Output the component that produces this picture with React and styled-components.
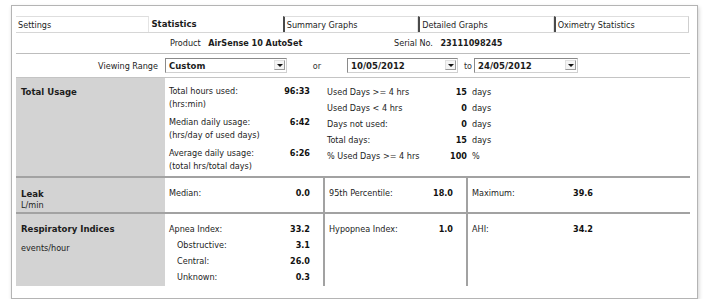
import styled, { createGlobalStyle } from "styled-components";

const GlobalStyle = createGlobalStyle`
  body {
    margin: 0;
    background: #ffffff;
    font-family: "DejaVu Sans Condensed", "DejaVu Sans", sans-serif;
    font-size: 9px;
    color: #1c1c1c;
  }
`;

const tabs = ["Settings", "Statistics", "Summary Graphs", "Detailed Graphs", "Oximetry Statistics"];

const usage = [
  ["Total hours used:", "(hrs:min)", "96:33"],
  ["Median daily usage:", "(hrs/day of used days)", "6:42"],
  ["Average daily usage:", "(total hrs/total days)", "6:26"],
];

const days = [
  ["Used Days >= 4 hrs", "15", "days"],
  ["Used Days < 4 hrs", "0", "days"],
  ["Days not used:", "0", "days"],
  ["Total days:", "15", "days"],
  ["% Used Days >= 4 hrs", "100", "%"],
];

const apnea = [
  ["Apnea Index:", "33.2", false],
  ["Obstructive:", "3.1", true],
  ["Central:", "26.0", true],
  ["Unknown:", "0.3", true],
];

const App = () => {
  return (
    <>
      <GlobalStyle />
      <Panel>
        <TabBar>
          {tabs.map((t, i) => (
            <Tab key={t} $active={i === 1} $marked={i > 1}>
              {t}
            </Tab>
          ))}
        </TabBar>

        <ProductRow>
          <span />
          <Pair>
            Product <b>AirSense 10 AutoSet</b>
          </Pair>
          <Pair>
            Serial No. <b>23111098245</b>
          </Pair>
        </ProductRow>

        <RangeRow>
          <RangeLabel>Viewing Range</RangeLabel>
          <Select $w={122}>Custom<DropButton /></Select>
          <Joiner $w={60}>or</Joiner>
          <Select $w={111}>10/05/2012<DropButton /></Select>
          <Joiner $w={16}>to</Joiner>
          <Select $w={104}>24/05/2012<DropButton /></Select>
        </RangeRow>

        <Table>
          <Row $h={98}>
            <LabelCell $pad={7}>
              <b>Total Usage</b>
            </LabelCell>
            <UsageCell>
              {usage.map(([a, b, v]) => (
                <UsageItem key={a}>
                  <div>
                    {a}
                    <br />
                    {b}
                  </div>
                  <Value>{v}</Value>
                </UsageItem>
              ))}
            </UsageCell>
            <DaysCell>
              {days.map(([a, v, u]) => (
                <DaysItem key={a}>
                  <span>{a}</span>
                  <Value>{v}</Value>
                  <span>{u}</span>
                </DaysItem>
              ))}
            </DaysCell>
          </Row>

          <Row $h={34}>
            <LabelCell $pad={9}>
              <b>Leak</b>
              <Unit>L/min</Unit>
            </LabelCell>
            <StatCell $pad={9}>
              <StatLine>
                <span>Median:</span>
                <Value>0.0</Value>
              </StatLine>
            </StatCell>
            <StatCell $pad={9} $divided>
              <StatLine>
                <span>95th Percentile:</span>
                <Value>18.0</Value>
              </StatLine>
            </StatCell>
            <StatCell $pad={9} $divided>
              <StatLine $wide>
                <span>Maximum:</span>
                <Value>39.6</Value>
              </StatLine>
            </StatCell>
          </Row>

          <Row $h={72} $last>
            <LabelCell $pad={7} $lh={16}>
              <b>Respiratory Indices</b>
              <Sub>events/hour</Sub>
            </LabelCell>
            <StatCell $pad={7} $lh={16}>
              {apnea.map(([a, v, indent]) => (
                <StatLine key={a} $indent={indent}>
                  <span>{a}</span>
                  <Value>{v}</Value>
                </StatLine>
              ))}
            </StatCell>
            <StatCell $pad={7} $lh={16} $divided>
              <StatLine>
                <span>Hypopnea Index:</span>
                <Value>1.0</Value>
              </StatLine>
            </StatCell>
            <StatCell $pad={7} $lh={16} $divided>
              <StatLine $wide>
                <span>AHI:</span>
                <Value>34.2</Value>
              </StatLine>
            </StatCell>
          </Row>
        </Table>
      </Panel>
    </>
  );
};

const Panel = styled.div`
  box-sizing: border-box;
  width: 687px;
  height: 294px;
  margin: 5px 0 0 11px;
  padding: 10px 7px 0 4px;
  border: 1px solid #b4b4b4;
  box-shadow: 1px 2px 4px rgba(0, 0, 0, 0.18);
  background: #fff;
`;

const TabBar = styled.div`
  display: flex;
  width: 673px;
  height: 17px;
  border-bottom: 1px solid #d6d6d6;
  box-sizing: border-box;
`;

const Tab = styled.div`
  flex: 1;
  display: flex;
  align-items: center;
  box-sizing: border-box;
  padding: 1px 0 0 2px;
  white-space: nowrap;
  font-weight: ${(p) => (p.$active ? "bold" : "normal")};
  font-size: ${(p) => (p.$active ? "9.5px" : "9px")};
  border-top: 1px solid ${(p) => (p.$active ? "transparent" : "#dedede")};
  border-right: 1px solid ${(p) => (p.$active ? "transparent" : "#e4e4e4")};
  border-left: ${(p) => (p.$marked ? "2px solid #4a4a4a" : "0")};
  margin-top: ${(p) => (p.$active ? "-4px" : "0")};
  background: #fff;
  &:last-child {
    border-right-color: #cfcfcf;
  }
`;

const ProductRow = styled.div`
  display: grid;
  grid-template-columns: 154px 224px 1fr;
  align-items: center;
  height: 20px;
  width: 674px;
  border-bottom: 1px solid #bdbdbd;
`;

const Pair = styled.div`
  b {
    margin-left: 5px;
    font-weight: bold;
  }
`;

const RangeRow = styled.div`
  display: flex;
  align-items: center;
  height: 23px;
  width: 674px;
  border-bottom: 1px solid #c4c4c4;
`;

const RangeLabel = styled.div`
  width: 149px;
  box-sizing: border-box;
  padding-right: 7px;
  text-align: right;
`;

const Select = styled.div`
  position: relative;
  width: ${(p) => p.$w}px;
  height: 15px;
  box-sizing: border-box;
  padding: 0 0 0 3px;
  display: flex;
  align-items: center;
  font-weight: bold;
  font-size: 9.5px;
  border: 1px solid #8a8a8a;
  border-right-color: #d0d0d0;
  border-bottom-color: #d0d0d0;
  background: #fff;
`;

const DropButton = styled.span`
  position: absolute;
  right: 1px;
  top: 1px;
  width: 11px;
  height: 10px;
  box-sizing: border-box;
  border: 1px solid #9a9a9a;
  border-top-color: #e0e0e0;
  border-left-color: #e0e0e0;
  background: #f4f4f4;
  &::after {
    content: "";
    position: absolute;
    left: 2px;
    top: 3px;
    border-left: 3px solid transparent;
    border-right: 3px solid transparent;
    border-top: 3px solid #111;
  }
`;

const Joiner = styled.div`
  width: ${(p) => p.$w}px;
  text-align: center;
  color: #333;
  padding-left: ${(p) => (p.$w < 20 ? 4 : 0)}px;
  box-sizing: border-box;
`;

const Table = styled.div`
  width: 674px;
`;

const Row = styled.div`
  display: grid;
  grid-template-columns: 149px 158px 143px 1fr;
  height: ${(p) => p.$h}px;
  border-bottom: ${(p) => (p.$last ? "0" : "2px solid #a2a2a2")};
  box-sizing: content-box;
`;

const LabelCell = styled.div`
  background: #d3d3d3;
  padding: ${(p) => p.$pad ?? 6}px 0 0 5px;
  line-height: ${(p) => p.$lh ?? 13}px;
  b {
    display: block;
    font-size: 9.5px;
  }
`;

const Unit = styled.div`
  line-height: 11px;
`;

const Sub = styled.div`
  margin-top: 3px;
`;

const UsageCell = styled.div`
  padding: 7px 13px 0 4px;
  display: flex;
  flex-direction: column;
  gap: 5px;
  line-height: 13px;
`;

const UsageItem = styled.div`
  display: flex;
  justify-content: space-between;
`;

const Value = styled.b`
  font-weight: bold;
  color: #111;
`;

const DaysCell = styled.div`
  grid-column: span 2;
  padding: 6px 0 0 4px;
  line-height: 16px;
`;

const DaysItem = styled.div`
  display: grid;
  grid-template-columns: 106px 29px auto;
  column-gap: 5px;
  span:first-child {
    white-space: nowrap;
  }
  b {
    text-align: right;
  }
`;

const StatCell = styled.div`
  padding: ${(p) => p.$pad}px 13px 0 4px;
  line-height: ${(p) => p.$lh ?? 13}px;
  border-left: ${(p) => (p.$divided ? "2px solid #a2a2a2" : "0")};
`;

const StatLine = styled.div`
  display: flex;
  justify-content: space-between;
  padding-left: ${(p) => (p.$indent ? 8 : 0)}px;
  width: ${(p) => (p.$wide ? "121px" : "auto")};
`;

export default App;
